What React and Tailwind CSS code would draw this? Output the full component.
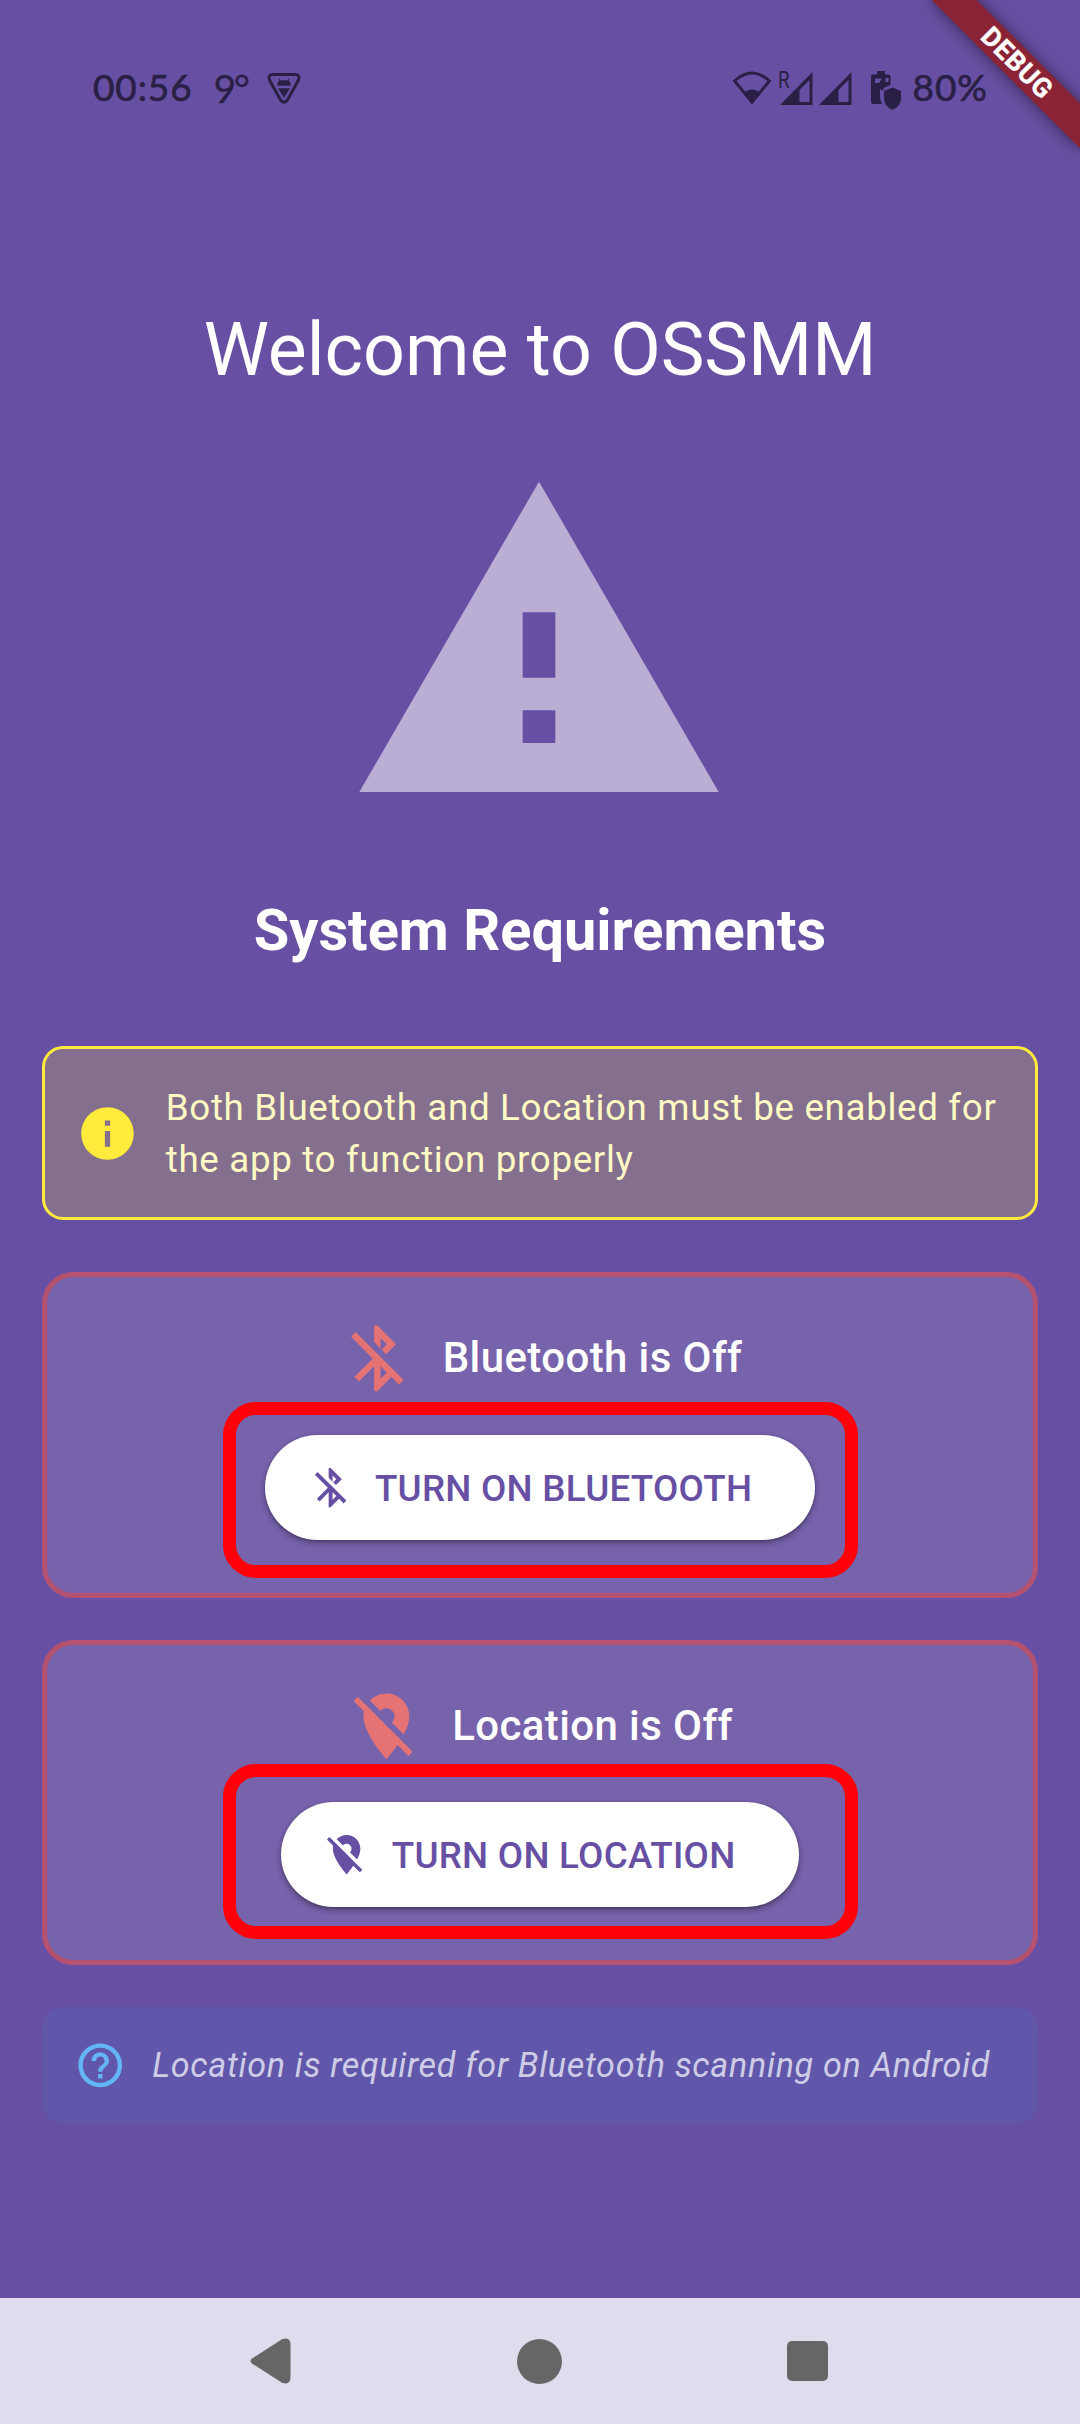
const ICONS = {
  warning: "M1 21h22L12 2 1 21zm12-3h-2v-2h2v2zm0-4h-2v-4h2v4z",
  info: "M12 2C6.48 2 2 6.48 2 12s4.48 10 10 10 10-4.48 10-10S17.52 2 12 2zm1 15h-2v-6h2v6zm0-8h-2V7h2v2z",
  help: "M11 18h2v-2h-2v2zm1-16C6.48 2 2 6.48 2 12s4.48 10 10 10 10-4.48 10-10S17.52 2 12 2zm0 18c-4.41 0-8-3.59-8-8s3.59-8 8-8 8 3.59 8 8-3.59 8-8 8zm0-14c-2.21 0-4 1.79-4 4h2c0-1.1.9-2 2-2s2 .9 2 2c0 2-3 1.75-3 5h2c0-2.25 3-2.5 3-5 0-2.21-1.79-4-4-4z",
  bluetoothOff:
    "M13 5.83l1.88 1.88-1.6 1.6 1.41 1.41 3.02-3.02L12 2h-1v5.03l2 2v-3.2zM5.41 4L4 5.41 10.59 12 5 17.59 6.41 19 11 14.41V22h1l4.29-4.29 2.3 2.29L20 18.59 5.41 4zM13 18.17v-3.76l1.88 1.88L13 18.17z",
  locationOff:
    "M12 6.5c1.38 0 2.5 1.12 2.5 2.5 0 .74-.33 1.39-.83 1.85l3.63 3.63c.98-1.86 1.7-3.8 1.7-5.48 0-3.87-3.13-7-7-7-1.98 0-3.76.83-5.04 2.15l3.19 3.19c.46-.52 1.11-.84 1.85-.84zm4.37 9.6l-4.63-4.63-.11-.11L3.27 3 2 4.27l3.18 3.18C5.07 7.95 5 8.47 5 9c0 5.25 7 13 7 13s1.67-1.85 3.38-4.35L18.73 21 20 19.73l-3.63-3.63z",
};

function Icon({ name, className }) {
  return (
    <svg viewBox="0 0 24 24" fill="currentColor" className={`shrink-0 ${className}`}>
      <path d={ICONS[name]} />
    </svg>
  );
}

function Signal({ className }) {
  return (
    <svg viewBox="0 0 33 33" fill="currentColor" className={`h-[33px] w-[33px] shrink-0 ${className}`}>
      <path fillRule="evenodd" d="M32.500 0V33H0ZM29.500 8V30H19.500V18Z" />
    </svg>
  );
}

function StatusBar() {
  return (
    <header className="flex h-[176px] shrink-0 items-start justify-between pt-[66px] pr-[92px] pl-[93px] text-[#2a2045]">
      <div className="flex h-[44px] items-center font-[Lato,sans-serif]">
        <span className="mt-[-3px] text-[37px] leading-[44px] tracking-[0.9px] [-webkit-text-stroke:0.7px_currentColor]">00:56</span>
        <span className="mt-[-1px] ml-[21px] text-[39px] leading-[44px] tracking-[-2.5px] [-webkit-text-stroke:0.3px_currentColor]">9°</span>
        <svg viewBox="0 0 36 34" className="ml-[19px] h-[34px] w-[36px] shrink-0">
          <path
            d="M6.500 3.500H29.500Q34.500 4 32.500 9L21.500 29Q18 33.500 14.500 29L3.500 9Q1.500 4 6.500 3.500Z"
            fill="none"
            stroke="currentColor"
            strokeWidth="3"
          />
          <path
            fill="currentColor"
            d="M13 7l1.300 2.200h7.400l1.300-2.200v3q2 1.500 2 4.800H11q0-3.300 2-4.800ZM12 17.300h12L18 27Z"
          />
        </svg>
      </div>
      <div className="flex h-[44px] items-center">
        <svg viewBox="0 0 40 34" className="h-[34px] w-[40px] shrink-0">
          <path d="M20 31L2.500 10Q20 -6 37.500 10Z" fill="none" stroke="currentColor" strokeWidth="3" />
          <path d="M20 33L11.500 22.500Q20 14.500 28.500 22.500Z" fill="currentColor" />
        </svg>
        <span className="mt-[-17px] ml-[6px] w-[2px] font-[Roboto,sans-serif] text-[24px] leading-[24px] whitespace-nowrap">
          <span className="inline-block origin-left scale-x-[0.78]">R</span>
        </span>
        <Signal className="ml-0" />
        <Signal className="ml-[6px]" />
        <svg viewBox="0 0 32 40" fill="currentColor" className="mt-[5px] ml-[18px] h-[40px] w-[32px] shrink-0">
          <path
            fillRule="evenodd"
            d="M7 0h8v3.500h3.500q2 0 2 2V14l-7 3V20l-3.500-2V27l2 6H3q-2 0-2-2V5.500q0-2 2-2h4ZM5 7.500v4.500h4L12 7.500ZM15.500 7v4h3v-4Z"
          />
          <path d="M22.500 16.500l8.500 3.500v7.500q0 7.500-8.500 11.500q-8.500-4-8.500-11.500V20Z" />
        </svg>
        <span className="mt-[-3px] ml-[10px] font-[Lato,sans-serif] text-[37px] leading-[44px] tracking-[1px] [-webkit-text-stroke:0.7px_currentColor]">
          80%
        </span>
      </div>
    </header>
  );
}

function DebugBanner() {
  return (
    <div className="absolute top-[47px] left-[912px] flex h-[32px] w-[210px] rotate-45 items-center justify-center bg-[#8a2335] shadow-[0_0_16px_rgba(0,0,0,0.5)]">
      <span className="text-[26.775px] leading-none font-bold tracking-[0.66px] text-white [-webkit-text-stroke:0.4px_white]">DEBUG</span>
    </div>
  );
}

function RequirementCard({ icon, title, action, actionClass, frame }) {
  return (
    <section className="relative mt-[42px] flex h-[325.5px] flex-col items-center rounded-[31.5px] border-[5px] border-[#b4526f] bg-[#7762ac] pt-[42.25px] first-of-type:mt-[52.5px]">
      <div className="flex h-[78.75px] items-center">
        <Icon name={icon} className="h-[78.75px] w-[78.75px] text-[#e57373]" />
        <h3 className="mt-[-2.5px] ml-[26.25px] text-[42px] leading-[63px] font-medium tracking-[0.394px] text-white">{title}</h3>
      </div>
      <button className="mt-[36.75px] flex h-[105px] items-center rounded-full bg-white pr-[63px] pl-[42px] text-[#6750a4] shadow-[0_3px_6px_rgba(0,0,0,0.32),0_1px_3px_rgba(0,0,0,0.2)]">
        <Icon name={icon} className="h-[47.25px] w-[47.25px]" />
        <span className={`ml-[21px] text-[36.75px] leading-[52.5px] font-medium tracking-[0.2625px] ${actionClass}`}>{action}</span>
      </button>
      <div className={`pointer-events-none absolute left-[175.5px] h-[175.5px] w-[635px] rounded-[33px] border-[13px] border-[#ff0008] ${frame}`} />
    </section>
  );
}

export default function App() {
  return (
    <div className="relative flex h-[2424px] w-[1080px] flex-col overflow-hidden bg-[#6750a3] font-[Roboto,sans-serif]">
      <StatusBar />
      <main className="flex flex-1 flex-col px-[42px] pt-[126.6px]">
        <h1 className="text-center text-[73.5px] leading-[94.5px] font-normal text-white">Welcome to OSSMM</h1>
        <Icon name="warning" className="mt-[52.4px] ml-[300.7px] h-[392px] w-[392px] text-[#baaed5]" />
        <h2 className="mt-[53.85px] text-center text-[57.75px] leading-[71.5px] font-bold text-white">System Requirements</h2>
        <div className="mt-[79.4px] flex h-[173.5px] items-center rounded-[21px] border-[3px] border-[#ffeb3b] bg-[#856f8e] pt-[3px] pl-[31px]">
          <Icon name="info" className="mt-[-1px] h-[63px] w-[63px] text-[#ffeb3b]" />
          <p className="ml-[26.75px] text-[36.75px] leading-[52.5px] tracking-[0.656px] whitespace-nowrap text-[#fff9c4]">
            Both Bluetooth and Location must be enabled for
            <br />
            the app to function properly
          </p>
        </div>
        <RequirementCard
          icon="bluetoothOff"
          title="Bluetooth is Off"
          action="TURN ON BLUETOOTH"
          actionClass="mt-[3px]"
          frame="top-[125px]"
        />
        <RequirementCard
          icon="locationOff"
          title="Location is Off"
          action="TURN ON LOCATION"
          actionClass="mt-[2px]"
          frame="top-[119px]"
        />
        <div className="mt-[42px] flex h-[115.5px] items-center rounded-[21px] bg-[#6057ab] pl-[31.5px]">
          <Icon name="help" className="h-[52.5px] w-[52.5px] text-[#64b5f6]" />
          <p className="ml-[26.25px] text-[34.125px] leading-[52.5px] tracking-[0.67px] whitespace-nowrap text-[#cfcce6] italic">
            Location is required for Bluetooth scanning on Android
          </p>
        </div>
      </main>
      <nav className="flex h-[126px] shrink-0 items-center bg-[#e0dced] pl-[250px] text-[#666666]">
        <svg viewBox="0 0 41 46" fill="currentColor" className="h-[46px] w-[41px]">
          <path d="M2 20.500L32 1.300Q40.500-1.500 40.500 7V39Q40.500 47.500 32 44.700L2 25.500Q-1 23 2 20.500Z" />
        </svg>
        <div className="ml-[226px] h-[45px] w-[45px] rounded-full bg-[#666666]" />
        <div className="ml-[225px] h-[40.5px] w-[40.5px] rounded-[5px] bg-[#666666]" />
      </nav>
      <DebugBanner />
    </div>
  );
}
